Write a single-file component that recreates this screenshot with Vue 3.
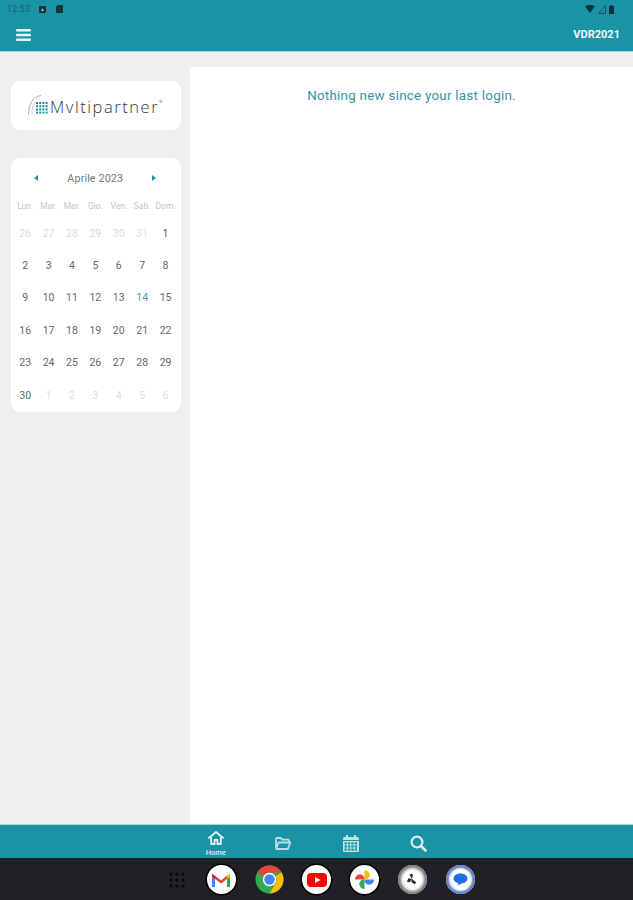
<template>
  <div class="screen">
    <header class="top">
      <div class="status">
        <div class="status-left">
          <span class="clock">12:53</span>
          <svg class="st-icon" width="9" height="9" viewBox="0 0 9 9"><rect x="1" y="1" width="7" height="7" rx="1" fill="#17333b" /><path d="M3 6l1.5-3L6 6z" fill="#8fc4cc" /></svg>
          <svg class="st-icon" width="9" height="10" viewBox="0 0 9 10"><path d="M2.5 1H8v8H1V3z" fill="#17333b" /></svg>
        </div>
        <div class="status-right">
          <svg width="10" height="8" viewBox="0 0 10 8"><path d="M0 1.2Q5-1.2 10 1.2L5 8z" fill="#12303a" /></svg>
          <svg width="8" height="9" viewBox="0 0 8 9"><path d="M7.5 0.5V8.500H0.500z" fill="none" stroke="#17505c" stroke-width="1" /></svg>
          <svg width="5" height="9" viewBox="0 0 5 9"><path d="M1.500 0h2v1H5v8H0V1h1.500z" fill="#12303a" /></svg>
        </div>
      </div>
      <div class="toolbar">
        <svg class="menu" width="15" height="12" viewBox="0 0 15 12">
          <rect y="0" width="15" height="2.600" rx="1" />
          <rect y="4.700" width="15" height="2.600" rx="1" />
          <rect y="9.400" width="15" height="2.600" rx="1" />
        </svg>
        <span class="code">VDR2021</span>
      </div>
    </header>

    <div class="content">
      <aside class="side">
        <div class="card logo-card">
          <svg class="logo-mark" width="24" height="22" viewBox="0 0 24 22">
            <path d="M1.500 21C1.500 10 6 2.500 14 1.500" fill="none" stroke="#9a9a9a" stroke-width=".8" />
            <path d="M5 20C5 12 7 6.500 12 4" fill="none" stroke="#c4c4c4" stroke-width=".7" />
            <g fill="#1f8c9c">
              <rect v-for="d in logoDots" :key="d.k" :x="d.x" :y="d.y" width="2" height="2" />
            </g>
          </svg>
          <span class="logo-text">Mvltipartner</span><span class="logo-reg">®</span>
        </div>

        <div class="card calendar">
          <div class="cal-head">
            <svg width="4" height="6" viewBox="0 0 4 6"><path d="M4 0v6L0 3z" fill="#1a94a5" /></svg>
            <span class="month">Aprile 2023</span>
            <svg width="4" height="6" viewBox="0 0 4 6"><path d="M0 0v6l4-3z" fill="#1a94a5" /></svg>
          </div>
          <div class="week">
            <span v-for="w in weekdays" :key="w">{{ w }}</span>
          </div>
          <div class="days">
            <span
              v-for="d in days"
              :key="d.key"
              :class="['day', { muted: d.muted, today: d.today }]"
            >{{ d.n }}</span>
          </div>
        </div>
      </aside>

      <main class="panel">
        <p class="empty">Nothing new since your last login.</p>
      </main>
    </div>

    <nav class="tabs">
      <div class="tab active">
        <svg width="16" height="14" viewBox="0 0 16 14">
          <path d="M1 7l7-6 7 6" fill="none" stroke="#e4f1f3" stroke-width="1.800" stroke-linejoin="round" stroke-linecap="round" />
          <path d="M3.200 6.500V13h3.400V9h2.800v4h3.400V6.500" fill="none" stroke="#e4f1f3" stroke-width="1.800" stroke-linejoin="round" />
        </svg>
        <span>Home</span>
      </div>
      <div class="tab">
        <svg width="16" height="13" viewBox="0 0 16 13">
          <path d="M1 11V2.200Q1 1 2.200 1h3.600l1.400 1.600h5.400Q14 2.600 14 4v1" fill="none" stroke="#b9dfe4" stroke-width="1.800" />
          <path d="M1.200 12l2.200-6.500h11.800L13 12z" fill="none" stroke="#b9dfe4" stroke-width="1.800" stroke-linejoin="round" />
        </svg>
      </div>
      <div class="tab">
        <svg width="16" height="17" viewBox="0 0 16 17">
          <path d="M3 0h2v2h6V0h2v2h1.500Q16 2 16 3.500V5H0V3.500Q0 2 1.500 2H3z" fill="#c4e2e6" />
          <path d="M0 6h16v9.500Q16 17 14.500 17h-13Q0 17 0 15.500z" fill="#c4e2e6" />
          <g fill="#1a94a5">
            <rect v-for="c in calCells" :key="c.k" :x="c.x" :y="c.y" width="2.400" height="2.200" />
          </g>
        </svg>
      </div>
      <div class="tab">
        <svg width="17" height="17" viewBox="0 0 17 17">
          <circle cx="7" cy="7" r="5.400" fill="none" stroke="#dceef0" stroke-width="2.200" />
          <path d="M11 11l4.500 4.500" stroke="#dceef0" stroke-width="2.600" stroke-linecap="round" />
        </svg>
      </div>
    </nav>

    <footer class="dock">
      <svg class="apps" width="16" height="16" viewBox="0 0 16 16">
        <g fill="#08080a">
          <circle v-for="a in appDots" :key="a.k" :cx="a.x" :cy="a.y" r="1.600" />
        </g>
      </svg>

      <div class="app white">
        <svg width="20" height="16" viewBox="0 0 20 16">
          <path d="M1 15V3l3 2v10z" fill="#4285f4" />
          <path d="M16 15V5l3-2v12z" fill="#34a853" />
          <path d="M1 1.500l3 2.500v3L1 4.500z" fill="#c5221f" />
          <path d="M4 3.500l6 5 6-5v3.500l-6 4.500L4 7z" fill="#ea4335" />
          <path d="M16 3.500l3-2v3l-3 2.500z" fill="#fbbc04" />
        </svg>
      </div>

      <svg class="chrome" width="29" height="29" viewBox="0 0 29 29">
        <circle cx="14.500" cy="14.500" r="14" fill="#34a853" />
        <path d="M14.500.5A14 14 0 0 1 26.600 7.500H14.500A7 7 0 0 0 8.400 11L2.400 7.500A14 14 0 0 1 14.500.5z" fill="#ea4335" />
        <path d="M26.600 7.500A14 14 0 0 1 14.500 28.500L20.600 18A7 7 0 0 0 20.600 11z" fill="#fbbc04" />
        <circle cx="14.500" cy="14.500" r="6.700" fill="#fff" />
        <circle cx="14.500" cy="14.500" r="5.200" fill="#4285f4" />
      </svg>

      <div class="app white">
        <svg width="20" height="14" viewBox="0 0 20 14">
          <rect width="20" height="14" rx="4" fill="#f00" />
          <path d="M8 4l5.500 3L8 10z" fill="#fff" />
        </svg>
      </div>

      <div class="app white">
        <svg width="21" height="21" viewBox="0 0 21 21">
          <path d="M10.500 10.500V1a5.300 5.300 0 0 1 5.300 5.200 5.300 5.300 0 0 1-5.300 4.300z" fill="#fbbc04" />
          <path d="M10.500 10.500H20a5.300 5.300 0 0 1-5.200 5.300 5.300 5.300 0 0 1-4.300-5.300z" fill="#4285f4" />
          <path d="M10.500 10.500V20a5.300 5.300 0 0 1-5.300-5.200 5.300 5.300 0 0 1 5.300-4.300z" fill="#34a853" />
          <path d="M10.500 10.500H1a5.300 5.300 0 0 1 5.200-5.300 5.300 5.300 0 0 1 4.300 5.300z" fill="#ea4335" />
        </svg>
      </div>

      <div class="app ringed">
        <svg width="12" height="13" viewBox="0 0 14 15">
          <path d="M7 7L4 2l3-1.500 1 2zM7 7l5 4-2 2-4-3zM7 7l-3 4-3-1 2-4z" fill="#2b2b2b" />
        </svg>
      </div>

      <div class="app blue-ring">
        <svg width="15" height="13" viewBox="0 0 17 15">
          <path d="M8.500 0.500C13 .5 16.500 3 16.500 6.300S13 12 9.500 12L6 14.500V11.700C3 11 .5 9 .5 6.300.5 3 4 .5 8.500.5z" fill="#1a6ee6" />
        </svg>
      </div>
    </footer>
  </div>
</template>

<script setup>
const weekdays = ["Lun.", "Mar.", "Mer.", "Gio.", "Ven.", "Sab.", "Dom."];

const days = [];
[26, 27, 28, 29, 30, 31].forEach((n) => days.push({ key: "p" + n, n, muted: true }));
for (let n = 1; n <= 30; n++) days.push({ key: "c" + n, n, today: n === 14 });
for (let n = 1; n <= 6; n++) days.push({ key: "x" + n, n, muted: true });

const logoDots = [];
for (let r = 0; r < 4; r++) {
  for (let c = 0; c < 4; c++) {
    logoDots.push({ k: r + "-" + c, x: 9 + c * 3.2, y: 8 + r * 3.2 });
  }
}

const calCells = [];
for (let r = 0; r < 3; r++) {
  for (let c = 0; c < 4; c++) {
    calCells.push({ k: r + "-" + c, x: 1.500 + c * 3.400, y: 7.300 + r * 3.100 });
  }
}

const appDots = [];
for (let r = 0; r < 3; r++) {
  for (let c = 0; c < 3; c++) {
    appDots.push({ k: r + "-" + c, x: 2 + c * 6, y: 2 + r * 6 });
  }
}
</script>

<style>
html,
body {
  margin: 0;
  background: #efefef;
}
</style>

<style scoped>
.screen {
  width: 633px;
  height: 900px;
  display: flex;
  flex-direction: column;
  background: #efefef;
  font-family: Roboto, "Liberation Sans", sans-serif;
  overflow: hidden;
}

.top {
  height: 51px;
  flex: none;
  background: #1a94a5;
  border-bottom: 1px solid #a5d6dc;
  box-sizing: content-box;
}

.status {
  height: 18px;
  display: flex;
  align-items: center;
  justify-content: space-between;
  padding: 0 19px 0 7px;
}

.status-left,
.status-right {
  display: flex;
  align-items: center;
}

.status-left {
  gap: 8px;
}

.status-right {
  gap: 3px;
}

.clock {
  font-size: 8.500px;
  color: #1f5a66;
  letter-spacing: 0.4px;
}

.toolbar {
  height: 33px;
  display: flex;
  align-items: center;
  justify-content: space-between;
  padding: 0 13px 0 16px;
  box-sizing: border-box;
}

.menu {
  fill: #e6f4f6;
}

.code {
  font-size: 11px;
  font-weight: 700;
  color: #f1f9fa;
}

.content {
  flex: 1;
  min-height: 0;
  display: flex;
  padding-top: 15px;
}

.side {
  width: 190px;
  flex: none;
  padding: 14px 9px 0 11px;
  box-sizing: border-box;
  display: flex;
  flex-direction: column;
  gap: 28px;
}

.card {
  background: #fff;
  border-radius: 9px;
}

.logo-card {
  height: 49px;
  display: flex;
  align-items: center;
  padding: 1px 0 0 16px;
  box-sizing: border-box;
}

.logo-mark {
  margin-right: -1px;
  margin-top: -2px;
}

.logo-text {
  font-family: "Open Sans", "Liberation Sans", sans-serif;
  font-size: 16.500px;
  font-weight: 300;
  color: #333;
  letter-spacing: 1.550px;
}

.logo-reg {
  font-size: 4px;
  color: #555;
  margin-bottom: 10px;
}

.calendar {
  height: 254px;
  padding: 0 2.500px;
  box-sizing: border-box;
}

.cal-head {
  height: 40px;
  display: flex;
  align-items: center;
  justify-content: space-between;
  padding: 0 22px 0 20.500px;
}

.month {
  font-size: 10.800px;
  color: #777;
  letter-spacing: 0.1px;
}

.week {
  display: grid;
  grid-template-columns: repeat(7, 23.400px);
  height: 16px;
  align-items: center;
  text-align: center;
  font-size: 8.500px;
  color: #c4c4c4;
}

.days {
  display: grid;
  grid-template-columns: repeat(7, 23.400px);
  grid-auto-rows: 32.400px;
  margin-top: 3px;
  align-items: center;
  text-align: center;
}

.day {
  font-size: 10.500px;
  color: #666;
}

.day.muted {
  color: #dcdcdc;
}

.day.today {
  color: #3fa3b1;
}

.panel {
  flex: 1;
  background: #fff;
  border-top-left-radius: 3px;
}

.empty {
  margin: 21px 0 0;
  text-align: center;
  font-size: 13.400px;
  color: #3a929f;
  letter-spacing: 0.25px;
}

.tabs {
  height: 34px;
  flex: none;
  background: #1a94a5;
  border-top: 1px solid #a5d6dc;
  box-sizing: border-box;
  display: grid;
  grid-template-columns: repeat(4, 67.500px);
  padding-left: 182px;
}

.tab {
  display: flex;
  flex-direction: column;
  align-items: center;
  justify-content: center;
  padding-top: 4px;
  box-sizing: border-box;
}

.tab.active {
  justify-content: flex-start;
  padding-top: 6px;
}

.tab span {
  font-size: 7.500px;
  font-weight: 500;
  color: #dff0f2;
  line-height: 9px;
  margin-top: 3px;
}

.dock {
  height: 42px;
  flex: none;
  background: #202124;
  display: flex;
  align-items: center;
  padding: 1px 0 0 169px;
  box-sizing: border-box;
  gap: 18.800px;
}

.apps {
  margin-right: 3px;
}

.app {
  width: 29px;
  height: 29px;
  border-radius: 50%;
  display: flex;
  align-items: center;
  justify-content: center;
  flex: none;
}

.chrome {
  flex: none;
}

.white {
  background: #fff;
  box-shadow: 0 0 0 1.500px #000;
}

.ringed {
  background: #fff;
  box-shadow: inset 0 0 3px 3px #777;
}

.blue-ring {
  background: #fff;
  box-shadow: inset 0 0 2px 3px #5f80c4;
}
</style>
